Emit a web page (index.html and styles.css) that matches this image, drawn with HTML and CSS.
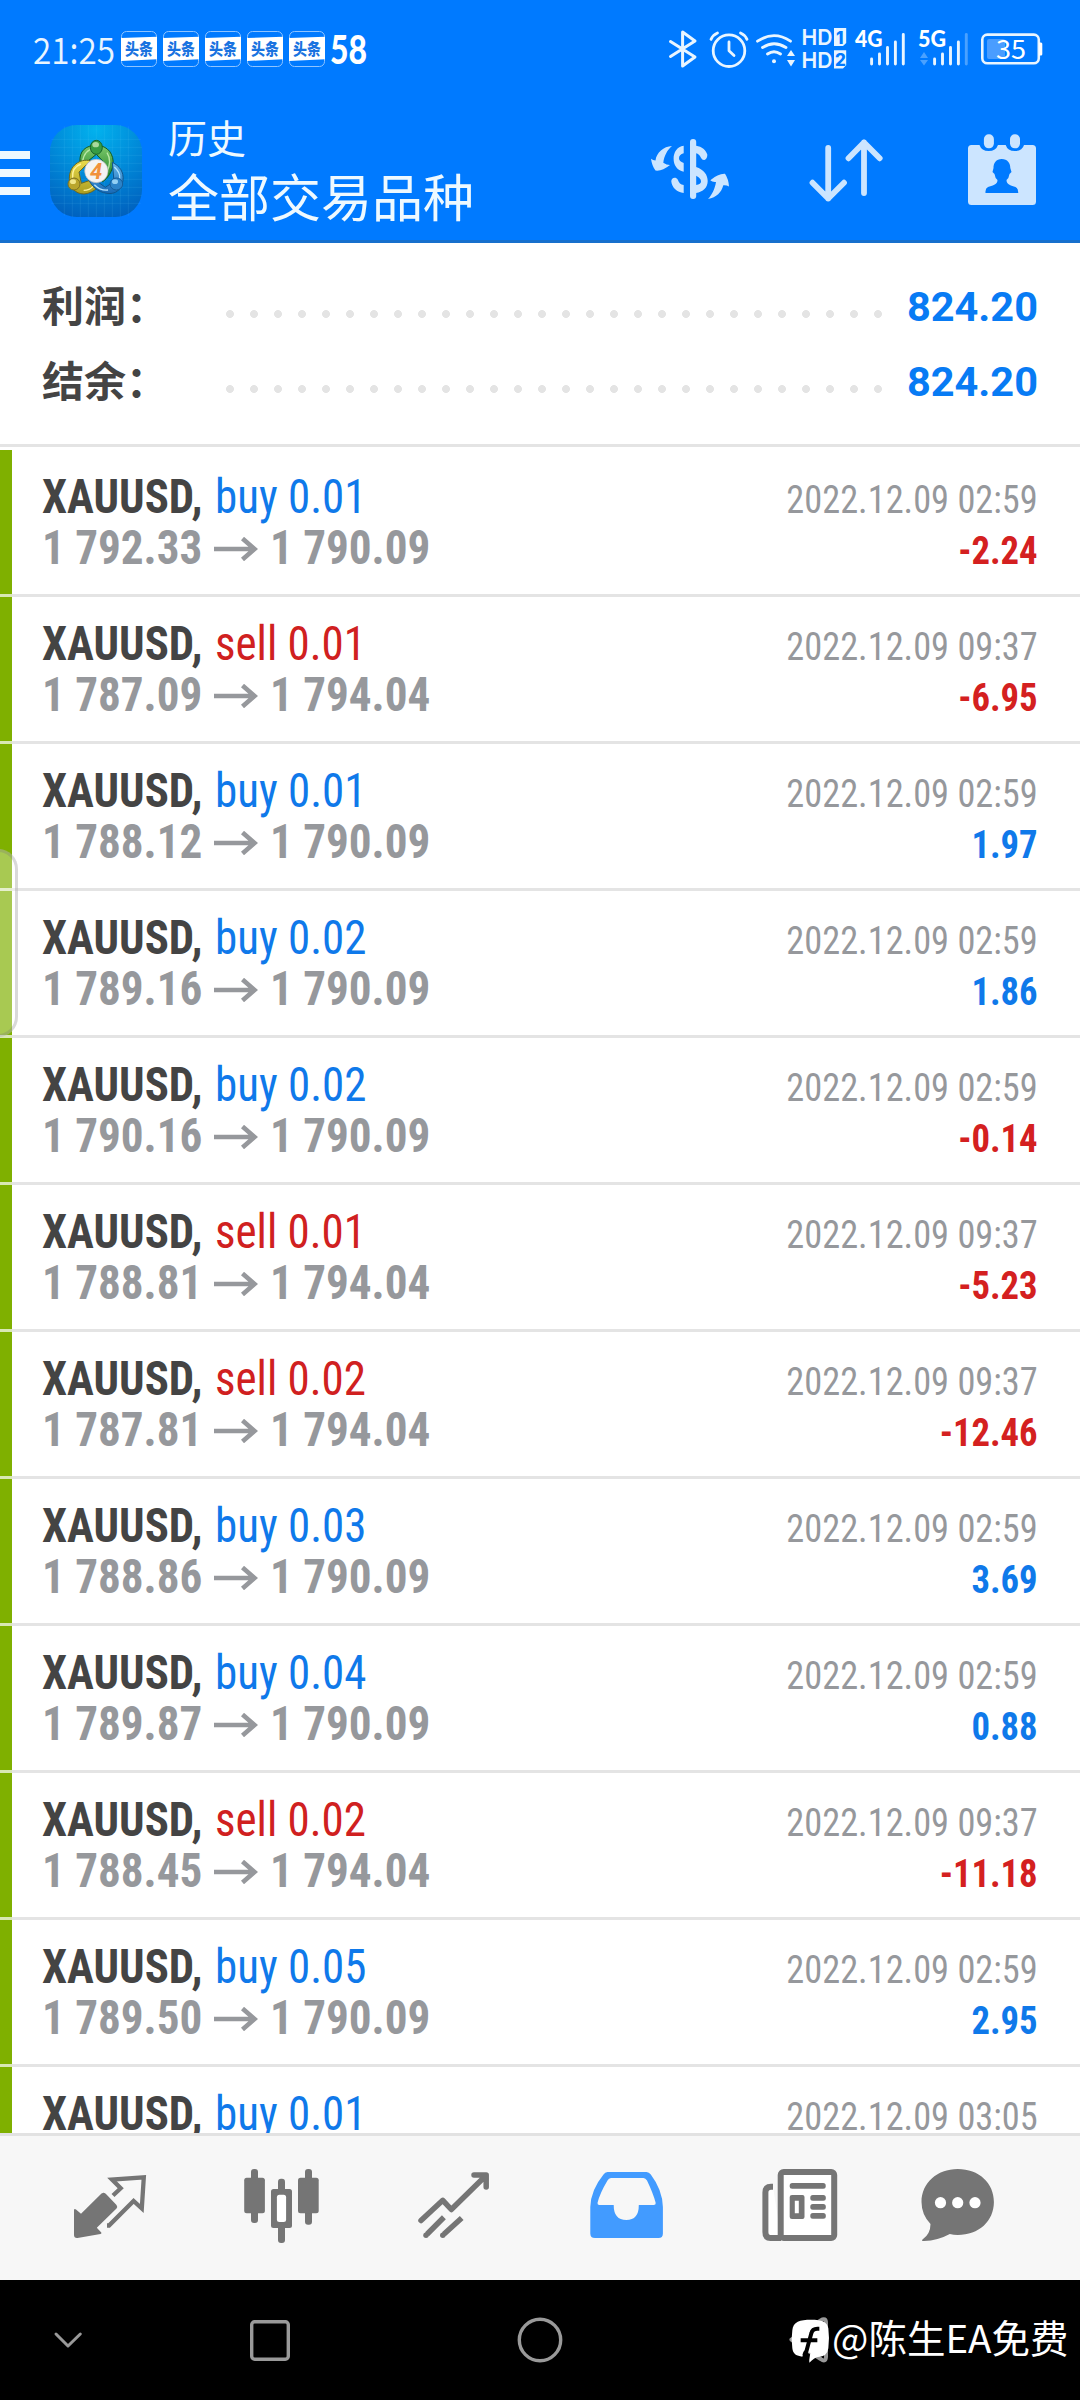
FILE: index.html
```html
<!DOCTYPE html>
<html lang="zh-CN">
<head>
<meta charset="utf-8">
<title>历史</title>
<link rel="stylesheet" href="styles.css">
</head>
<body>
<svg class="defs" width="0" height="0" aria-hidden="true">
  <defs>
    <symbol id="arrow" viewBox="0 0 44 24"><path d="M0 12H40M28.500 1.500L40.500 12L28.500 22.500" fill="none" stroke="#96989c" stroke-width="4.600"/></symbol>
    <symbol id="toutiao" viewBox="0 0 42 42">
      <rect x=".5" y="3.500" width="35" height="35" rx="5" fill="none" stroke="#8fc4ff" stroke-width="1"/>
      <path d="M0 10L36 8.700V31.300L0 33Z" fill="#fff"/>
      <text x="4" y="27" font-size="16" font-weight="900" fill="#1a73e0" textLength="28" lengthAdjust="spacingAndGlyphs">头条</text>
    </symbol>
  </defs>
</svg>
<div class="screen">
  <header class="header">
    <div class="status">
      <svg width="87" height="42" viewBox="34 28 87 42"><text class="clock" x="33" y="64" textLength="82" lengthAdjust="spacingAndGlyphs">21:25</text></svg>
      <svg width="42" height="42"><use href="#toutiao"/></svg>
      <svg width="42" height="42"><use href="#toutiao"/></svg>
      <svg width="42" height="42"><use href="#toutiao"/></svg>
      <svg width="42" height="42"><use href="#toutiao"/></svg>
      <svg width="42" height="42"><use href="#toutiao"/></svg>
      <svg width="38" height="42" viewBox="331 28 38 42"><text class="app58" x="330" y="63.500" font-size="39" textLength="37" lengthAdjust="spacingAndGlyphs">58</text></svg>
      <span class="spacer"></span>
      <svg width="40" height="42" viewBox="664 28 40 42" fill="none" stroke="#e9f5ff" stroke-width="3" stroke-linejoin="round" stroke-linecap="round"><path d="M670.500 41.500L695 57L682.600 66V32L695 41L670.500 56.500"/></svg>
      <svg width="48" height="42" viewBox="704 28 48 42" fill="none" stroke="#e9f5ff" stroke-width="2.800" stroke-linecap="round" stroke-linejoin="round"><circle cx="729" cy="50.700" r="15.800"/><path d="M729 42V50.700L734 55.500M711 39.300Q713 35 717.500 33M740.500 33Q745 35 747 39.300"/></svg>
      <svg width="48" height="42" viewBox="752 28 48 42" fill="none" stroke="#e9f5ff" stroke-width="2.800" stroke-linecap="round"><path d="M757.500 41.200Q774 30 790.500 41.200M762.500 47.500Q774 40 786 47.500M767.500 54Q774 49.500 780.500 54"/><path d="M791 50L795 56H787ZM791 66.500L795 60H787Z" fill="#e9f5ff" stroke="none"/><circle cx="774" cy="61.300" r="2" fill="#e9f5ff" stroke="none"/></svg>
      <svg width="50" height="42" viewBox="800 28 50 42" fill="#e9f5ff"><path d="M834 28H846.200V43L843 46H834ZM834 50.300H846.200V65.300L843 68.500H834Z"/><g class="hd"><text x="801.500" y="45.300" textLength="31" lengthAdjust="spacingAndGlyphs">HD</text><text x="801.500" y="68.200" textLength="31" lengthAdjust="spacingAndGlyphs">HD</text></g><g class="sim"><text x="836" y="43.500">1</text><text x="835" y="66">2</text></g></svg>
      <svg width="60" height="42" viewBox="850 28 60 42" fill="none" stroke="#e9f5ff" stroke-width="2.900" stroke-linecap="round"><path d="M871.600 59V64M879.500 54V64M887.500 47.500V64M895.400 42V64M903.300 34.500V64"/><text class="net" x="855" y="47.300" textLength="27.500" lengthAdjust="spacingAndGlyphs">4G</text></svg>
      <svg width="65" height="42" viewBox="910 28 65 42" fill="none" stroke="#e9f5ff" stroke-width="2.900" stroke-linecap="round"><path d="M934.600 59V64M942.500 54V64M950.500 47.500V64M958.400 42V64"/><path d="M966.300 34.500V64" stroke="#4aa1ff"/><path d="M924 52L928 58H920ZM924 65.500L928 60H920Z" fill="#4aa1ff" stroke="none"/><text class="net" x="918" y="47.300" textLength="28" lengthAdjust="spacingAndGlyphs">5G</text></svg>
      <svg width="70" height="42" viewBox="975 28 70 42"><rect x="987" y="39" width="18" height="20" rx="2" fill="#4a9dff"/><rect x="982.300" y="34.600" width="56.500" height="28.600" rx="5" fill="none" stroke="#e9f5ff" stroke-width="2.600"/><path d="M1039 42.500H1041Q1042.300 42.500 1042.300 44V54Q1042.300 55.500 1041 55.500H1039Z" fill="#fff"/><text class="battery" x="996" y="58.700" textLength="30" lengthAdjust="spacingAndGlyphs">35</text></svg>
    </div>
    <div class="toolbar">
      <svg class="menu" width="30" height="44" viewBox="0 0 30 44" fill="#eef8ff"><path d="M0 0H30V8H0ZM0 18H30V26H0ZM0 36H30V44H0Z"/></svg>
      <svg class="logo" width="92" height="92" viewBox="18 20 276 276">
        <defs>
          <radialGradient id="bg" cx=".5" cy=".05" r="1"><stop offset="0" stop-color="#02b2ee"/><stop offset=".55" stop-color="#0085d6"/><stop offset="1" stop-color="#005fbd"/></radialGradient>
          <linearGradient id="gr" x1="0" y1="0" x2="0" y2="1"><stop offset="0" stop-color="#7cc96c"/><stop offset="1" stop-color="#1c7e24"/></linearGradient>
          <linearGradient id="ye" x1="0" y1="0" x2="0" y2="1"><stop offset="0" stop-color="#eadb4c"/><stop offset="1" stop-color="#aa9d20"/></linearGradient>
          <linearGradient id="bl" x1="0" y1="0" x2="0" y2="1"><stop offset="0" stop-color="#65b7ea"/><stop offset="1" stop-color="#1769b6"/></linearGradient>
        </defs>
        <rect x="18" y="20" width="276" height="276" rx="80" fill="url(#bg)"/>
        <path d="M61 24V292M85 20V296M109 20V296M133 20V296M157 20V296M181 20V296M205 20V296M229 20V296M253 24V292M22 63H290M18 87H294M18 111H294M18 135H294M18 159H294M18 183H294M18 207H294M18 231H294M22 255H290" stroke="#7fd5ff" stroke-opacity=".16" stroke-width="2"/>
        <path d="M108 132C105 98 125 81 157 81C192 81 211 109 207 140C204 160 192 179 176 190L158 166L180 132L157 108L132 128Z" fill="url(#gr)" stroke="#135b20" stroke-width="3"/>
        <path d="M115 132C120 101 135 92 151 91M189 103Q205 128 188 162" fill="none" stroke="#b9e8a6" stroke-width="4"/>
        <path d="M139 127C108 120 76 142 76 180C77 207 94 227 120 227C136 226 149 218 158 210L141 185L112 195L105 161Z" fill="url(#ye)" stroke="#6f681c" stroke-width="3"/>
        <path d="M86 179Q83 147 111 137M119 216Q137 216 147 204" fill="none" stroke="#fff39b" stroke-width="4"/>
        <path d="M205 132C227 143 240 161 237 186C233 215 214 229 189 225C160 221 143 204 132 180L158 188L184 207L210 190Z" fill="url(#bl)" stroke="#10558c" stroke-width="3"/>
        <path d="M211 146Q230 163 227 180M151 199Q170 218 192 215" fill="none" stroke="#b6e5ff" stroke-width="4"/>
        <ellipse cx="157" cy="87" rx="18" ry="21" fill="#379c43" stroke="#17642a" stroke-width="3"/><ellipse cx="155" cy="79" rx="10" ry="8" fill="#a9d99d"/>
        <ellipse cx="90" cy="197" rx="18" ry="18" fill="#b9a52c" stroke="#7c7022" stroke-width="3"/><ellipse cx="87" cy="190" rx="9" ry="7" fill="#f1e68a"/>
        <ellipse cx="217" cy="197" rx="19" ry="18" fill="#2c83c8" stroke="#155d9a" stroke-width="3"/><ellipse cx="213" cy="190" rx="9" ry="7" fill="#92cff3"/>
        <circle cx="157" cy="158" r="35" fill="#f4f3f3" stroke="#b5b7b8" stroke-width="2"/>
        <text class="four" x="138" y="182">4</text>
      </svg>
      <div class="titles"><div class="title-small">历史</div><div class="title-big">全部交易品种</div></div>
      <svg class="act-dollar" width="80" height="64" viewBox="650 137 80 64" fill="#cce5ff">
        <rect x="690" y="139" width="6.200" height="60" rx="3"/>
        <path d="M683.700 145.700C677 146.500 673.600 152.500 673.600 158.500C673.600 165 677 170.500 683.700 171.700V163C680.500 162 679 160.500 679 158.300C679 156 680.500 154 683.700 153.300ZM671.300 181.500C671 177.500 676 176.500 677.700 179.500C679 183 680.500 184.500 683.700 185V193C677 192.500 672 187.500 671.300 181.500ZM696 145.700C702 146.500 706 150 707.300 154.500C707.500 160 703 162 700.800 157.500C699.500 155 698.500 154 696 153.300ZM696 167C704 169.500 707.700 175 707.700 181C707.700 187.500 703 192 696 193V185C699.500 184.500 701 183.500 701 181.500C701 179 699.500 177.500 696 175.700Z"/>
        <path d="M672 146C663.500 146.500 656.500 152.500 655.500 160.500Q653 160.500 651 158.700Q652 166 655.500 170.500Q662 171.500 670 165Q666.500 165 663.300 162.700C664 156 667.500 149.500 672 146ZM708 199C712 195 715 188.500 716 182Q712.500 182.500 710.300 180.300Q718 173.500 725 173.800Q728.500 179 729 186.500Q726.500 185 723.300 185.300C721.500 192.500 716.500 197.500 708 199Z"/>
      </svg>
      <svg class="act-sort" width="76" height="64" viewBox="808 138 76 64" fill="none" stroke="#cce5ff" stroke-width="5.800" stroke-linecap="round" stroke-linejoin="round"><path d="M828.200 148V198.500M812.500 182.700L828.200 198.500L844 182.700M864 193V142.500M848.500 158.300L864 142.500L879.700 158.300"/></svg>
      <svg class="act-cal" width="70" height="74" viewBox="967 133 70 74" fill="#cce5ff"><path d="M971 145H979.500Q981.500 151 988.700 151T998 145H1005.700Q1007.500 151 1014.900 151T1024 145H1032.500Q1036 145 1036 148.500V201.500Q1036 205 1032.500 205H971.500Q968 205 968 201.500V148.500Q968 145 971.500 145ZM1001.800 159C996 159 993.500 163 993.500 168L992.500 172L994.500 174Q995 178 997.500 180C997.500 185 992 185.500 988 187Q985 188.500 985.500 193H1018.200Q1018.500 188.500 1015.500 187C1011.500 185.500 1006.500 185 1006.500 180Q1009 178 1009.500 174L1011.500 172L1010.300 168C1010.300 163 1007.500 159 1001.800 159Z" fill-rule="evenodd"/><rect x="983.900" y="134.300" width="10" height="14" rx="4.800"/><rect x="1010" y="134.300" width="10" height="14" rx="4.800"/></svg>
    </div>
  </header>

  <section class="summary">
    <div class="sum-row"><span class="sum-label">利润：</span><span class="dots"></span><span class="sum-value">824.20</span></div>
    <div class="sum-row"><span class="sum-label">结余：</span><span class="dots"></span><span class="sum-value">824.20</span></div>
  </section>

  <main class="list">
    <article class="deal"><div class="left"><div class="name"><b>XAUUSD,</b><span class="buy">buy 0.01</span></div><div class="prices"><span class="from">1 792.33</span><svg class="arr"><use href="#arrow"/></svg><span class="to">1 790.09</span></div></div><div class="right"><div class="date">2022.12.09 02:59</div><div class="profit loss">-2.24</div></div></article>
    <article class="deal"><div class="left"><div class="name"><b>XAUUSD,</b><span class="sell">sell 0.01</span></div><div class="prices"><span class="from">1 787.09</span><svg class="arr"><use href="#arrow"/></svg><span class="to">1 794.04</span></div></div><div class="right"><div class="date">2022.12.09 09:37</div><div class="profit loss">-6.95</div></div></article>
    <article class="deal"><div class="left"><div class="name"><b>XAUUSD,</b><span class="buy">buy 0.01</span></div><div class="prices"><span class="from">1 788.12</span><svg class="arr"><use href="#arrow"/></svg><span class="to">1 790.09</span></div></div><div class="right"><div class="date">2022.12.09 02:59</div><div class="profit">1.97</div></div></article>
    <article class="deal"><div class="left"><div class="name"><b>XAUUSD,</b><span class="buy">buy 0.02</span></div><div class="prices"><span class="from">1 789.16</span><svg class="arr"><use href="#arrow"/></svg><span class="to">1 790.09</span></div></div><div class="right"><div class="date">2022.12.09 02:59</div><div class="profit">1.86</div></div></article>
    <article class="deal"><div class="left"><div class="name"><b>XAUUSD,</b><span class="buy">buy 0.02</span></div><div class="prices"><span class="from">1 790.16</span><svg class="arr"><use href="#arrow"/></svg><span class="to">1 790.09</span></div></div><div class="right"><div class="date">2022.12.09 02:59</div><div class="profit loss">-0.14</div></div></article>
    <article class="deal"><div class="left"><div class="name"><b>XAUUSD,</b><span class="sell">sell 0.01</span></div><div class="prices"><span class="from">1 788.81</span><svg class="arr"><use href="#arrow"/></svg><span class="to">1 794.04</span></div></div><div class="right"><div class="date">2022.12.09 09:37</div><div class="profit loss">-5.23</div></div></article>
    <article class="deal"><div class="left"><div class="name"><b>XAUUSD,</b><span class="sell">sell 0.02</span></div><div class="prices"><span class="from">1 787.81</span><svg class="arr"><use href="#arrow"/></svg><span class="to">1 794.04</span></div></div><div class="right"><div class="date">2022.12.09 09:37</div><div class="profit loss">-12.46</div></div></article>
    <article class="deal"><div class="left"><div class="name"><b>XAUUSD,</b><span class="buy">buy 0.03</span></div><div class="prices"><span class="from">1 788.86</span><svg class="arr"><use href="#arrow"/></svg><span class="to">1 790.09</span></div></div><div class="right"><div class="date">2022.12.09 02:59</div><div class="profit">3.69</div></div></article>
    <article class="deal"><div class="left"><div class="name"><b>XAUUSD,</b><span class="buy">buy 0.04</span></div><div class="prices"><span class="from">1 789.87</span><svg class="arr"><use href="#arrow"/></svg><span class="to">1 790.09</span></div></div><div class="right"><div class="date">2022.12.09 02:59</div><div class="profit">0.88</div></div></article>
    <article class="deal"><div class="left"><div class="name"><b>XAUUSD,</b><span class="sell">sell 0.02</span></div><div class="prices"><span class="from">1 788.45</span><svg class="arr"><use href="#arrow"/></svg><span class="to">1 794.04</span></div></div><div class="right"><div class="date">2022.12.09 09:37</div><div class="profit loss">-11.18</div></div></article>
    <article class="deal"><div class="left"><div class="name"><b>XAUUSD,</b><span class="buy">buy 0.05</span></div><div class="prices"><span class="from">1 789.50</span><svg class="arr"><use href="#arrow"/></svg><span class="to">1 790.09</span></div></div><div class="right"><div class="date">2022.12.09 02:59</div><div class="profit">2.95</div></div></article>
    <article class="deal"><div class="left"><div class="name"><b>XAUUSD,</b><span class="buy">buy 0.01</span></div></div><div class="right"><div class="date">2022.12.09 03:05</div></div></article>
  </main>
  <div class="edge-handle"></div>

  <nav class="tabs">
    <svg width="180" height="90" viewBox="20 2160 180 90"><path d="M103.300 2192.700Q105 2192.500 106.500 2194.500L116.500 2205Q118 2207 116.500 2208.500L96.800 2227.700L101.300 2232.500Q101.800 2233.700 100.500 2234L77.500 2238Q74 2238.300 74 2235V2210Q74.300 2208.500 76 2209.500L81 2213.800L101.500 2193.500Z" fill="#757575"/><path d="M113 2195.500L120.700 2188.300L112 2179.500L143.800 2177.300L141.800 2208.500L133.600 2201L109 2225.500H107" fill="none" stroke="#757575" stroke-width="4.300"/></svg>
    <svg width="175" height="90" viewBox="200 2160 175 90"><g fill="#757575"><rect x="251" y="2169" width="7" height="54" rx="3"/><rect x="244.200" y="2177.700" width="20.700" height="35.500" rx="2.500"/><rect x="278" y="2178.700" width="7" height="64.300" rx="3"/><rect x="305" y="2169" width="7" height="55.700" rx="3"/><rect x="298" y="2177.700" width="20.700" height="35.500" rx="2.500"/><rect x="271" y="2189" width="21" height="39" rx="2.500"/></g><rect x="276.900" y="2194.700" width="9.200" height="27.300" rx="2.500" fill="#fff"/></svg>
    <svg width="165" height="90" viewBox="375 2160 165 90" fill="none" stroke="#757575" stroke-width="5.500" stroke-linejoin="round"><path d="M421 2220.500L442.800 2200.300L451.300 2209.500L486 2175.500M474 2175H486.200V2187" stroke-linecap="round"/><path d="M427 2234.300L443.900 2217.300M443.800 2234.300L461.700 2218"/><g fill="#757575" stroke="none"><circle cx="426" cy="2235.300" r="2.750"/><circle cx="442.800" cy="2235.300" r="2.750"/></g></svg>
    <svg width="170" height="90" viewBox="540 2160 170 90"><path d="M603.500 2174.500Q605 2172 607.500 2172H646.500Q649 2172 650.800 2174.500Q662.500 2190 662.900 2207V2233.500Q662.900 2238 658.500 2238H595Q590.300 2238 590.300 2233.500V2207Q590.800 2190 603.500 2174.500ZM611 2178Q608.700 2178 607.500 2180.500Q600 2193 597.600 2202.500Q597.300 2205 599.500 2205H613.700Q613.700 2220 626.300 2220T638.800 2205H653.500Q656 2205 655.600 2202.500Q653 2193 647 2180.500Q645.500 2178 643.500 2178Z" fill="#429bff" fill-rule="evenodd"/></svg>
    <svg width="170" height="90" viewBox="710 2160 170 90"><path d="M773 2186.800H771Q765.400 2186.800 765.400 2192.500V2232Q765.400 2238 770.500 2238H781" fill="#fff" stroke="#757575" stroke-width="6"/><rect x="780.700" y="2172" width="53.500" height="66" rx="3" fill="#fff" stroke="#757575" stroke-width="6"/><g fill="#757575"><rect x="789.700" y="2183" width="36" height="5.700" rx="2.500"/><path d="M792 2195H802.500Q804.500 2195 804.500 2197V2217Q804.500 2219 802.500 2219H792Q789.700 2219 789.700 2217V2197Q789.700 2195 792 2195ZM794.800 2200.700V2213.300H798.800V2200.700Z" fill-rule="evenodd"/><rect x="810.300" y="2195" width="15.500" height="5.700" rx="2.500"/><rect x="810.300" y="2204" width="15.500" height="5.700" rx="2.500"/><rect x="810.300" y="2213" width="15.500" height="5.700" rx="2.500"/></g></svg>
    <svg width="180" height="90" viewBox="880 2160 180 90"><path d="M957.700 2169C979 2169 993.900 2183 993.900 2202C993.900 2221 979 2235 957.700 2235Q953.500 2235 949.800 2234Q938 2240.500 924 2241Q921 2241 922.500 2239.500Q930.500 2234 930.500 2224Q921.500 2214.500 921.500 2202C921.500 2183 937 2169 957.700 2169Z" fill="#757575"/><g fill="#fff"><circle cx="940.500" cy="2202.700" r="5.600"/><circle cx="957.700" cy="2202.700" r="5.600"/><circle cx="975" cy="2202.700" r="5.600"/></g></svg>
  </nav>

  <footer class="sysnav">
    <svg width="180" height="60" viewBox="0 2310 180 60" fill="none" stroke="#999" stroke-width="3" stroke-linecap="round" stroke-linejoin="round"><path d="M56 2334L68 2346L80.300 2334"/></svg>
    <svg width="180" height="60" viewBox="180 2310 180 60" fill="none" stroke="#999" stroke-width="3.400"><rect x="251.700" y="2321.700" width="36.600" height="37.600" rx="3"/></svg>
    <svg width="360" height="60" viewBox="360 2310 360 60" fill="none" stroke="#999" stroke-width="3.400"><circle cx="540" cy="2340" r="20.700"/></svg>
    <div class="watermark">
      <svg width="40" height="60" viewBox="0 15 120 180"><path d="M4 104L92 46Q108 36 108 54V154Q108 174 92 162Z" fill="none" stroke="#999" stroke-width="12" stroke-linejoin="round"/><path d="M63 44C95 44 112 50 115 70Q119 100 115 130Q112 155 84 156Q73 158 58 173Q57 166 59 156L61 144L42 137L37 155C20 153 9 148 7 130Q3 100 7 76C9 50 30 44 63 44Z" fill="#fff"/><path d="M88 71H82Q67 71 64 85L54 121Q51 139 42 152M32 106H82" fill="none" stroke="#000" stroke-width="12"/></svg>
      <span class="handle">@陈生EA免费</span>
    </div>
  </footer>
</div>
</body>
</html>
```
FILE: styles.css
```css
* { box-sizing: border-box; }
body { margin: 0; background: #fff; font-family: "Roboto", "Noto Sans CJK SC", sans-serif; }
svg { display: block; flex: none; overflow: visible; }
.defs { position: absolute; }
.screen { position: relative; width: 1080px; height: 2400px; display: flex; flex-direction: column; overflow: hidden; background: #fff; }

.header { height: 243px; flex: none; background: #007aff; border-bottom: 3px solid #1770cd; }
.status { display: flex; padding: 28px 35px 0 34px; height: 70px; }
.spacer { flex: 1; }
.clock { font-family: "Noto Sans CJK SC", sans-serif; font-weight: 350; font-size: 36px; fill: #e9f5ff; }
.app58 { font-family: "Lato", sans-serif; font-weight: 900; fill: #fff; }
.hd text { font-family: "Inter", sans-serif; font-size: 22px; font-weight: 600; }
.sim text { font-family: "Inter", sans-serif; font-size: 17px; font-weight: 800; fill: #007aff; }
.net { font-family: "Lato", sans-serif; font-weight: 900; font-size: 22px; fill: #fff; stroke: none; }
.battery { font-family: "Noto Sans CJK SC", sans-serif; font-size: 26px; fill: #fff; }
#toutiao text { font-family: "Noto Sans CJK SC", sans-serif; }

.toolbar { display: flex; align-items: flex-start; height: 170px; padding-right: 43px; }
.menu { margin-top: 81px; }
.logo { margin: 55px 0 0 20px; }
.four { font: italic 700 66px "Roboto", sans-serif; fill: #f1913b; }
.titles { flex: 1; padding: 40px 0 0 26px; color: #eef9ff; font-family: "Noto Sans CJK SC", sans-serif; white-space: nowrap; }
.title-small { font-size: 39px; line-height: 53px; }
.title-big { font-size: 51px; line-height: 65px; }
.act-dollar { margin-top: 67px; }
.act-sort { margin: 68px 0 0 78px; }
.act-cal { margin: 63px 0 0 83px; }

.summary { height: 207px; flex: none; padding: 26px 42px 0; background: linear-gradient(#e4e4e4, #e4e4e4) 0 201px / 100% 3px no-repeat #fff; }
.sum-row { display: flex; align-items: center; height: 75px; }
.sum-label { width: 176px; height: 75px; font: 700 42px/69px "Noto Sans CJK SC", sans-serif; color: #444; white-space: nowrap; }
.dots { width: 672px; height: 8px; margin-top: 14px; background: radial-gradient(circle at center, #e4e4e4 3.600px, transparent 4.300px) 0 0 / 24px 8px; }
.sum-value { flex: 1; text-align: right; font: 700 41.500px/75px "Roboto", sans-serif; color: #087bf4; }

.list { height: 1683px; flex: none; overflow: hidden; }
.deal { height: 147px; display: flex; justify-content: space-between; padding: 0 42px 0 30px; border-left: 12px solid #7fb000; background: linear-gradient(#e4e4e4, #e4e4e4) 0 144px / 100% 3px no-repeat; position: relative; font-family: "Roboto Condensed", "Roboto", sans-serif; font-stretch: 75%; white-space: nowrap; }
.deal::before { content: ""; position: absolute; left: -12px; top: 144px; width: 12px; height: 3px; background: #d9e8b4; }
.left { padding-top: 21px; font-size: 48px; line-height: 51px; }
.name { display: flex; color: #444; }
.name b { width: 172.500px; transform: scaleX(.934); transform-origin: 0 0; }
.name span { transform: scaleX(.937); transform-origin: 0 0; }
.buy { color: #0f79ea; }
.sell { color: #d02020; }
.prices { display: flex; align-items: center; font-weight: 700; color: #96989c; }
.prices span { transform: scaleX(.94); transform-origin: 0 0; }
.from { width: 172px; }
.arr { width: 44px; height: 24px; margin: 2px 12px 0 0; }
.right { padding-top: 25px; font-size: 39px; line-height: 51px; text-align: right; }
.date { color: #96989c; transform: scaleX(.932); transform-origin: 100% 0; }
.profit { font-weight: 700; color: #0f79ea; transform: scaleX(.94); transform-origin: 100% 0; }
.loss { color: #d42020; }

.edge-handle { position: absolute; left: -22px; top: 849px; width: 40px; height: 188px; border: 3px solid rgba(120, 120, 120, .28); border-radius: 20px; background: rgba(255, 255, 255, .32); }

.tabs { height: 147px; flex: none; display: flex; align-items: flex-start; justify-content: center; padding-top: 24px; border-top: 3px solid #e2e2e2; background: #f7f7f7; }
.sysnav { height: 120px; display: flex; align-items: center; background: #000; }
.watermark { display: flex; align-items: center; padding-left: 70px; color: #fff; }
.handle { padding: 0 0 9px 2px; font: 400 38.500px/60px "Noto Sans CJK SC", sans-serif; white-space: nowrap; }
```
